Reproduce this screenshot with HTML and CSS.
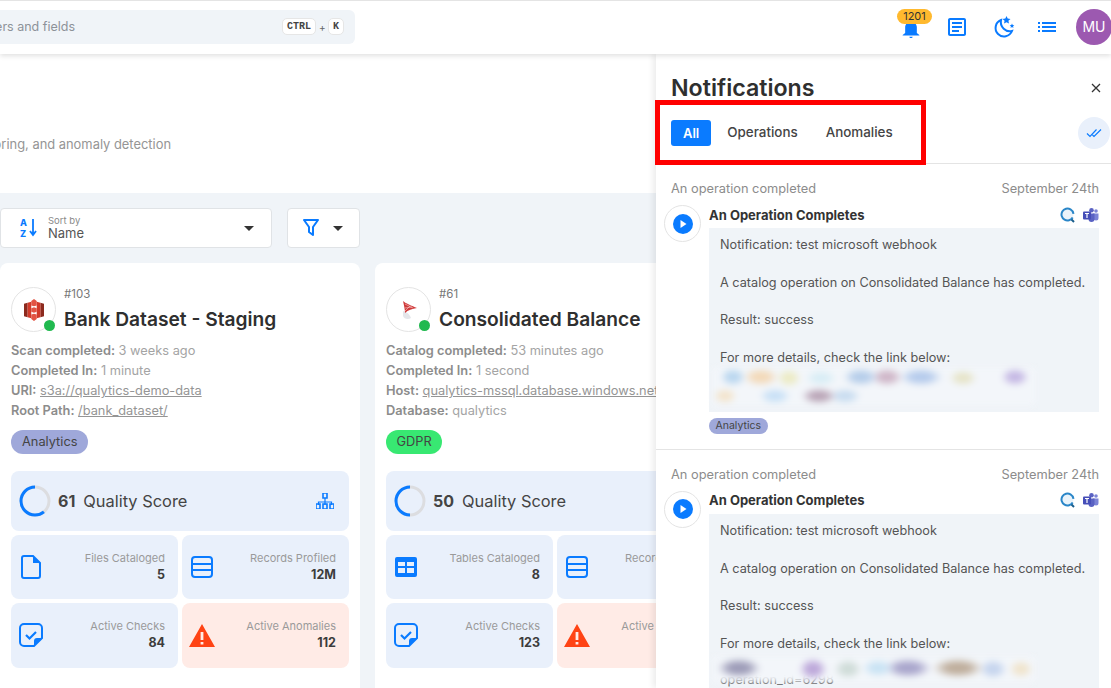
FILE: index.html
```html
<!DOCTYPE html>
<html lang="en">
<head>
    <meta charset="UTF-8">
    <meta name="viewport" content="width=device-width, initial-scale=1.0">
    <title>Datastores - Notifications</title>
    <link rel="stylesheet" href="styles.css">
</head>
<body>
    <!-- Shared icons -->
    <svg class="sprite" aria-hidden="true">
        <symbol id="i-records" viewBox="0 0 22 22"><rect x="1" y="1" width="20" height="20" rx="3" fill="none" stroke="currentColor" stroke-width="2"/><path d="M1 8h20M1 14h20" stroke="currentColor" stroke-width="2"/></symbol>
        <symbol id="i-check" viewBox="0 0 24 24"><path d="M5 1h14a4 4 0 0 1 4 4v10l-8 8H5a4 4 0 0 1-4-4V5a4 4 0 0 1 4-4z" fill="none" stroke="currentColor" stroke-width="2"/><path d="M15 23v-5a3 3 0 0 1 3-3h5z" fill="currentColor"/><path d="M7 12l3.500 3.500L17 9" fill="none" stroke="currentColor" stroke-width="2.200"/></symbol>
        <symbol id="i-warning" viewBox="0 0 26 23"><path d="M13 0l13 23H0zM11.600 8v8h2.800V8zm0 10v2.600h2.800V18z" fill="#ff4314" fill-rule="evenodd"/></symbol>
        <symbol id="i-play" viewBox="0 0 20 20"><circle cx="10" cy="10" r="10" fill="#0a7bff"/><path d="M7.500 6l6 4-6 4z" fill="#fff"/></symbol>
        <symbol id="i-search" viewBox="0 0 16 16"><circle cx="7.500" cy="7.500" r="6" fill="#eaf3fa" stroke="#2a86c8" stroke-width="2" stroke-dasharray="33 5" transform="rotate(30 7.500 7.500)"/><path d="M11.500 12.500l2.500 2.500" stroke="#1b5e8c" stroke-width="2"/></symbol>
        <symbol id="i-teams" viewBox="0 0 16 14"><circle cx="13" cy="3" r="1.800" fill="#7b83d6"/><path d="M10 5.500h5.500v4.500a2.500 2.500 0 0 1-5 0z" fill="#7b83d6"/><circle cx="8.500" cy="2.300" r="2.300" fill="#5a62c3"/><path d="M4.500 5.500h7v5.500a3 3 0 0 1-6 0z" fill="#5a62c3"/><rect x="0" y="3.500" width="8" height="8" rx="1" fill="#464eb8"/><path d="M2 5.500h4M4 5.500v4.500" stroke="#fff" stroke-width="1.200"/></symbol>
    </svg>

    <header class="topbar">
        <div class="search">
            <span class="search-text"><span>Search datastores, containers and fields</span></span>
            <span class="keys"><kbd>CTRL</kbd><i>+</i><kbd>K</kbd></span>
        </div>
        <div class="top-actions">
            <span class="bell">
                <span class="bell-badge">1201</span>
                <svg width="22" height="22" viewBox="0 0 24 24"><path fill="#0a7bff" d="M12 24c1.100 0 2-.5 2-1.500h-4c0 1 .890 1.500 2 1.500zm7-6v-7c0-3-2-6-7-6s-7 3-7 6v7l-3 2.500V21h20v-.500z"/></svg>
            </span>
            <svg class="top-icon icon-doc" width="24" height="24" viewBox="0 0 24 24"><path fill="#0a7bff" d="M19 5v14H5V5h14m0-2H5c-1.100 0-2 .9-2 2v14c0 1.100.9 2 2 2h14c1.100 0 2-.9 2-2V5c0-1.100-.9-2-2-2z"/><path fill="#0a7bff" d="M14 17H7v-2h7v2zm3-4H7v-2h10v2zm0-4H7V7h10v2z"/></svg>
            <svg class="top-icon icon-moon" width="24" height="24" viewBox="0 0 24 24"><path fill="none" stroke="#0a7bff" stroke-width="2" d="M10 5a8.500 8.500 0 1 0 11 11c-6 1.500-12.500-4-11-11z"/><path fill="#0a7bff" d="M15.500 1l1.200 2.600 2.800.3-2.100 1.900.6 2.800-2.500-1.400-2.500 1.400.6-2.800-2.100-1.900 2.800-.3zM21 8.500l.7 1.500 1.600.2-1.200 1.100.3 1.600-1.400-.8-1.400.8.3-1.600-1.200-1.100 1.600-.2z"/></svg>
            <svg class="top-icon icon-list" width="24" height="24" viewBox="0 0 24 24"><path fill="#0a7bff" d="M3 13h2v-2H3v2zm0 4h2v-2H3v2zm0-8h2V7H3v2zm4 4h14v-2H7v2zm0 4h14v-2H7v2zM7 7v2h14V7H7z"/></svg>
            <span class="avatar">MU</span>
        </div>
    </header>

    <section class="intro">
        <p class="subtitle"><span>Data cataloging, profiling, monitoring, and anomaly detection</span></p>
    </section>

    <main class="content">
        <div class="toolbar">
            <div class="sort">
                <span class="az">
                    <span class="az-letters">A<br>Z</span>
                    <svg width="8" height="18" viewBox="0 0 8 18"><path d="M4 0v15M1 12l3 4 3-4" fill="none" stroke="#0a7bff" stroke-width="1.800"/></svg>
                </span>
                <span class="sort-text"><small>Sort by</small>Name</span>
                <span class="caret"></span>
            </div>
            <div class="filter">
                <svg width="16" height="18" viewBox="0 0 16 18"><path d="M1 1h14L10 8v8L6 13V8z" fill="none" stroke="#0a7bff" stroke-width="2" stroke-linejoin="round"/></svg>
                <span class="caret"></span>
            </div>
        </div>

        <div class="cards">
            <!-- Bank Dataset -->
            <article class="card">
                <div class="card-head">
                    <span class="logo">
                        <svg width="20" height="22" viewBox="0 0 22 24"><path fill="#8c2a1e" d="M0 5l4-1v16l-4-1zM22 5l-4-1v16l4-1z"/><path fill="#d13a2a" d="M4 4l4-1v18l-4-1zM18 4l-4-1v18l4-1z"/><path fill="#e25444" d="M8 2l3-2 3 2v5l-3 1-3-1zM8 17l3-1 3 1v5l-3 2-3-2zM8 10l3-1 3 1v4l-3 1-3-1z"/></svg>
                        <b class="dot"></b>
                    </span>
                    <div>
                        <div class="num">#103</div>
                        <h2>Bank Dataset - Staging</h2>
                    </div>
                </div>
                <ul class="meta">
                    <li><b>Scan completed:</b> 3 weeks ago</li>
                    <li><b>Completed In:</b> 1 minute</li>
                    <li><b>URI:</b> <u>s3a://qualytics-demo-data</u></li>
                    <li><b>Root Path:</b> <u>/bank_dataset/</u></li>
                </ul>
                <span class="tag tag-analytics">Analytics</span>
                <div class="score">
                    <svg class="ring" width="32" height="32" viewBox="0 0 32 32"><circle class="ring-bg" cx="16" cy="16" r="14"/><circle class="ring-val" cx="16" cy="16" r="14" pathLength="100" stroke-dasharray="61 100"/></svg>
                    <b>61</b><span>Quality Score</span>
                    <svg class="tree" width="18" height="16" viewBox="0 0 18 16"><path d="M9 5v4M2.500 12V9h13v3M9 9v3" fill="none" stroke="#0a7bff" stroke-width="1.200"/><path d="M7 0h4v5H7zM0 11h4v5H0zM7 11h4v5H7zM14 11h4v5h-4z" fill="none" stroke="#0a7bff" stroke-width="1.600"/></svg>
                </div>
                <div class="stats">
                    <div class="stat">
                        <svg class="stat-icon icon-file" width="20" height="24" viewBox="0 0 20 24"><path d="M3 1h9l7 7v13a2 2 0 0 1-2 2H3a2 2 0 0 1-2-2V3a2 2 0 0 1 2-2z" fill="none" stroke="#0a7bff" stroke-width="2"/><path d="M12 1l7 7h-7z" fill="#0a7bff"/></svg>
                        <div class="stat-text"><span>Files Cataloged</span><b>5</b></div>
                    </div>
                    <div class="stat">
                        <svg class="stat-icon" width="22" height="22"><use href="#i-records"/></svg>
                        <div class="stat-text"><span>Records Profiled</span><b>12M</b></div>
                    </div>
                    <div class="stat stat-check">
                        <svg class="stat-icon" width="24" height="24"><use href="#i-check"/></svg>
                        <div class="stat-text"><span>Active Checks</span><b>84</b></div>
                    </div>
                    <div class="stat stat-alert">
                        <svg class="stat-icon" width="26" height="23"><use href="#i-warning"/></svg>
                        <div class="stat-text"><span>Active Anomalies</span><b>112</b></div>
                    </div>
                </div>
            </article>

            <!-- Consolidated Balance -->
            <article class="card">
                <div class="card-head">
                    <span class="logo">
                        <svg width="18" height="20" viewBox="0 0 18 20"><path d="M3 11c3 1 6 2 8 7-3 2-7 1-8-2z" fill="#e4e6ea"/><path d="M3 1c2 2 9 5 14 7-5 1-9 2-12 5 0-3-1-8-2-12z" fill="#cf3a3a"/><path d="M5 4l8 4M5 8l7-1M5 11l5-5" stroke="#f6c9c9" stroke-width=".6"/></svg>
                        <b class="dot"></b>
                    </span>
                    <div>
                        <div class="num">#61</div>
                        <h2>Consolidated Balance</h2>
                    </div>
                </div>
                <ul class="meta">
                    <li><b>Catalog completed:</b> 53 minutes ago</li>
                    <li><b>Completed In:</b> 1 second</li>
                    <li><b>Host:</b> <u>qualytics-mssql.database.windows.net</u></li>
                    <li><b>Database:</b> qualytics</li>
                </ul>
                <span class="tag tag-gdpr">GDPR</span>
                <div class="score">
                    <svg class="ring" width="32" height="32" viewBox="0 0 32 32"><circle class="ring-bg" cx="16" cy="16" r="14"/><circle class="ring-val" cx="16" cy="16" r="14" pathLength="100" stroke-dasharray="50 100"/></svg>
                    <b>50</b><span>Quality Score</span>
                </div>
                <div class="stats">
                    <div class="stat">
                        <svg class="stat-icon" width="22" height="20" viewBox="0 0 22 20"><path fill="#0a7bff" fill-rule="evenodd" d="M2 0h18a2 2 0 0 1 2 2v16a2 2 0 0 1-2 2H2a2 2 0 0 1-2-2V2a2 2 0 0 1 2-2zm1 5v4h7V5zm9 0v4h7V5zM3 11v5h7v-5zm9 0v5h7v-5z"/></svg>
                        <div class="stat-text"><span>Tables Cataloged</span><b>8</b></div>
                    </div>
                    <div class="stat">
                        <svg class="stat-icon" width="22" height="22"><use href="#i-records"/></svg>
                        <div class="stat-text"><span>Records Profiled</span><b>9M</b></div>
                    </div>
                    <div class="stat stat-check">
                        <svg class="stat-icon" width="24" height="24"><use href="#i-check"/></svg>
                        <div class="stat-text"><span>Active Checks</span><b>123</b></div>
                    </div>
                    <div class="stat stat-alert">
                        <svg class="stat-icon" width="26" height="23"><use href="#i-warning"/></svg>
                        <div class="stat-text"><span>Active Anomalies</span><b>40</b></div>
                    </div>
                </div>
            </article>
        </div>
    </main>

    <!-- Notifications drawer -->
    <aside class="drawer">
        <div class="drawer-top">
            <div class="drawer-title">
                <h1>Notifications</h1>
                <svg width="10" height="10" viewBox="0 0 10 10"><path d="M1 1l8 8M9 1l-8 8" stroke="#333" stroke-width="1.300"/></svg>
            </div>
            <div class="tabs">
                <span class="tab active">All</span>
                <span class="tab">Operations</span>
                <span class="tab">Anomalies</span>
                <span class="read-all">
                    <svg width="16" height="10" viewBox="0 0 16 10"><path d="M1 5.500l3 3L10.500 1.500M6.500 7L8 8.500 15 1.500" fill="none" stroke="#0a7bff" stroke-width="1.200"/></svg>
                </span>
            </div>
        </div>

        <div class="notif">
            <div class="notif-head"><span>An operation completed</span><span>September 24th</span></div>
            <div class="notif-row">
                <span class="notif-icon"><svg width="20" height="20"><use href="#i-play"/></svg></span>
                <div class="notif-body">
                    <div class="notif-title">
                        <b>An Operation Completes</b>
                        <svg width="16" height="16"><use href="#i-search"/></svg>
                        <svg width="16" height="14"><use href="#i-teams"/></svg>
                    </div>
                    <div class="msg">
                        <p>Notification: test microsoft webhook</p>
                        <p>A catalog operation on Consolidated Balance has completed.</p>
                        <p>Result: success</p>
                        <p class="msg-tight">For more details, check the link below:</p>
                        <div class="blur blur-one"></div>
                    </div>
                    <span class="tag tag-small">Analytics</span>
                </div>
            </div>
        </div>

        <div class="notif">
            <div class="notif-head"><span>An operation completed</span><span>September 24th</span></div>
            <div class="notif-row">
                <span class="notif-icon"><svg width="20" height="20"><use href="#i-play"/></svg></span>
                <div class="notif-body">
                    <div class="notif-title">
                        <b>An Operation Completes</b>
                        <svg width="16" height="16"><use href="#i-search"/></svg>
                        <svg width="16" height="14"><use href="#i-teams"/></svg>
                    </div>
                    <div class="msg">
                        <p>Notification: test microsoft webhook</p>
                        <p>A catalog operation on Consolidated Balance has completed.</p>
                        <p>Result: success</p>
                        <p class="msg-tight">For more details, check the link below:</p>
                        <div class="blur blur-two"></div>
                        <p class="msg-tight">operation_id=6298</p>
                    </div>
                </div>
            </div>
        </div>
    </aside>

    <!-- Red annotation round the tabs -->
    <div class="highlight"></div>
</body>
</html>
```

FILE: styles.css
```css
html, body {
    height: 100%;
}

body {
    margin: 0;
    overflow: hidden;
    position: relative;
    font-family: Inter, "Open Sans", sans-serif;
    color: #333;
    background: #fff;
}

.sprite {
    display: none;
}

/* Top bar */
.topbar {
    position: relative;
    z-index: 3;
    height: 54px;
    box-sizing: border-box;
    padding: 10px 0 0 0;
    display: flex;
    justify-content: space-between;
    background: #fff;
    border-top: 1px solid #e4e4e4;
    box-shadow: 0 2px 5px rgba(0, 0, 0, 0.12);
}

.search {
    width: 355px;
    height: 34px;
    box-sizing: border-box;
    margin-top: -1px;
    padding: 0 11px 1px 0;
    display: flex;
    align-items: center;
    justify-content: space-between;
    background: #f0f4f8;
    border-radius: 0 6px 6px 0;
    font-size: 12.500px;
    color: #8d9299;
}

.search-text {
    width: 75px;
    display: flex;
    justify-content: flex-end;
    overflow: hidden;
    white-space: nowrap;
}

.keys {
    display: flex;
    align-items: center;
    gap: 3px;
}

.keys i {
    width: 6px;
    font-style: normal;
    font-size: 10px;
    text-align: center;
    color: #666;
}

kbd {
    padding: 2px 4px;
    background: #fff;
    border: 1px solid #e6e6e6;
    border-radius: 5px;
    font-family: "Liberation Mono", monospace;
    font-size: 10px;
    font-weight: 700;
    color: #444;
}

.top-actions {
    display: flex;
    align-items: flex-start;
    margin-top: -1px;
}

.top-icon {
    margin-top: 5px;
}

.icon-doc {
    margin-left: 12.500px;
}

.icon-moon {
    margin-left: 22px;
}

.icon-list {
    margin-left: 20px;
}

.bell {
    position: relative;
    width: 35px;
    height: 30px;
    display: flex;
    justify-content: flex-start;
}

.bell svg {
    margin: 8px 0 0 4px;
    width: 20px;
    height: 20px;
}

.bell-badge {
    position: absolute;
    top: -1px;
    left: 0;
    width: 35px;
    height: 15px;
    background: #ffb92e;
    border-radius: 8px;
    font-size: 11px;
    line-height: 15px;
    text-align: center;
    color: #333;
}

.avatar {
    width: 36px;
    height: 36px;
    margin: -1px -1px 0 17.500px;
    border-radius: 50%;
    background: #9c59b0;
    color: #fff;
    font-size: 14px;
    line-height: 36px;
    text-align: center;
}

/* Intro */
.intro {
    height: 139px;
    box-sizing: border-box;
    padding-top: 82px;
}

.subtitle {
    width: 171px;
    margin: 0;
    display: flex;
    justify-content: flex-end;
    overflow: hidden;
    white-space: nowrap;
    font-size: 12.900px;
    line-height: 18px;
    color: #959595;
}

/* Content */
.content {
    height: 495px;
    box-sizing: border-box;
    padding-top: 15px;
    background: #f0f4f8;
}

.toolbar {
    display: flex;
    gap: 15px;
    height: 40px;
}

.sort, .filter {
    box-sizing: border-box;
    display: flex;
    align-items: center;
    background: #fff;
    border: 1px solid #e0e3e6;
    border-radius: 4px;
}

.sort {
    width: 272px;
    padding: 0 17px 0 19px;
}

.filter {
    width: 73px;
    padding: 0 16px 0 15px;
    justify-content: space-between;
}

.az {
    display: flex;
    align-items: center;
    gap: 2px;
    width: 28px;
}

.az-letters {
    font-size: 9px;
    line-height: 11px;
    font-weight: 800;
    color: #0a7bff;
}

.sort-text {
    flex: 1;
    padding-bottom: 2px;
    font-size: 13px;
    line-height: 14px;
    color: #555;
}

.sort-text small {
    display: block;
    font-size: 9.500px;
    line-height: 11px;
    color: #8a8a8a;
}

.caret {
    width: 0;
    height: 0;
    border-left: 5px solid transparent;
    border-right: 5px solid transparent;
    border-top: 5px solid #333;
}

.cards {
    display: flex;
    gap: 15px;
    margin-top: 15px;
}

.card {
    flex: 0 0 360px;
    box-sizing: border-box;
    height: 440px;
    padding: 24px 11px 0;
    background: #fff;
    border-radius: 8px;
}

.card-head {
    display: flex;
    gap: 8px;
}

.logo {
    position: relative;
    flex: none;
    width: 45px;
    height: 45px;
    box-sizing: border-box;
    display: flex;
    align-items: center;
    justify-content: center;
    border: 1px solid #e4e4e4;
    border-radius: 50%;
}

.dot {
    position: absolute;
    right: 0;
    bottom: 0;
    width: 11px;
    height: 11px;
    background: #20b94f;
    border-radius: 50%;
}

.num {
    font-size: 11.500px;
    line-height: 14px;
    color: #777;
}

.card h2 {
    margin: 5px 0 0;
    font-size: 19.200px;
    line-height: 26px;
    font-weight: 600;
    color: #2f2f2f;
    white-space: nowrap;
}

.meta {
    list-style: none;
    margin: 9px 0 0;
    padding: 0;
    font-size: 12.800px;
    line-height: 20px;
    color: #a4a4a4;
    white-space: nowrap;
}

.meta b {
    font-weight: 600;
    color: #8c8c8c;
}

.meta u {
    color: #959595;
}

.tag {
    display: inline-block;
    padding: 0 11px;
    height: 24px;
    margin-top: 9px;
    border-radius: 12px;
    font-size: 12.800px;
    line-height: 24px;
    color: #444;
}

.tag-analytics, .tag-small {
    background: #9fa8da;
}

.tag-gdpr {
    background: #38e872;
    padding: 0 10.500px;
}

.score {
    height: 60px;
    box-sizing: border-box;
    margin-top: 17px;
    padding: 0 15px 0 8px;
    display: flex;
    align-items: center;
    background: #e9f0fb;
    border-radius: 8px;
    font-size: 16px;
    color: #444;
}

.score span {
    font-size: 16.400px;
}

.score b {
    margin-left: 7px;
    margin-right: 8px;
    font-weight: 700;
}

.ring {
    transform: rotate(-90deg) scaleY(-1);
}

.ring circle {
    fill: none;
    stroke-width: 3;
}

.ring-bg {
    stroke: #dcdde0;
}

.ring-val {
    stroke: #0a7bff;
}

.tree {
    margin-left: auto;
}

.stats {
    display: grid;
    grid-template-columns: 1fr 1fr;
    grid-template-rows: 64px 65px;
    gap: 4px;
    margin-top: 4px;
}

.stat {
    box-sizing: border-box;
    padding: 0 13px 0 9px;
    display: flex;
    align-items: center;
    justify-content: space-between;
    background: #e9f0fb;
    border-radius: 8px;
    color: #0a7bff;
}

.stat-check {
    padding-left: 8px;
    padding-bottom: 1px;
}

.stat-alert {
    padding-left: 7px;
    padding-bottom: 1px;
    background: #ffebe6;
}

.icon-file {
    margin-left: 1px;
}

.stat-text {
    text-align: right;
    white-space: nowrap;
}

.stat-text span {
    display: block;
    font-size: 11px;
    line-height: 16px;
    color: #9a9a9a;
}

.stat-text b {
    display: block;
    font-size: 12.500px;
    line-height: 18px;
    font-weight: 700;
    color: #3c3c3c;
}

/* Drawer */
.drawer {
    position: absolute;
    z-index: 2;
    top: 54px;
    right: 0;
    bottom: 0;
    width: 455px;
    background: #fff;
    box-shadow: -3px 0 6px rgba(0, 0, 0, 0.08);
    overflow: hidden;
}

.drawer-top {
    height: 110px;
    box-sizing: border-box;
    padding: 21px 0 0 15px;
    border-bottom: 1px solid #e4e4e4;
}

.drawer-title {
    display: flex;
    align-items: center;
    justify-content: space-between;
    padding-right: 10px;
}

.drawer-title h1 {
    margin: 0;
    font-size: 23.200px;
    line-height: 26px;
    font-weight: 600;
    color: #2f2f2f;
}

.tabs {
    display: flex;
    align-items: center;
    margin-top: 19px;
    height: 26px;
    font-size: 13.400px;
    font-weight: 500;
    color: #444;
}

.tab {
    padding: 0 14px 1px;
    line-height: 25px;
}

.tab.active {
    padding: 0 12px;
    margin-right: 2px;
    background: #0a7bff;
    color: #fff;
    border-radius: 3px;
    font-size: 13px;
    line-height: 26px;
    font-weight: 600;
}

.read-all {
    width: 32px;
    height: 32px;
    margin-left: auto;
    margin-right: 1px;
    display: flex;
    align-items: center;
    justify-content: center;
    background: #e9f0fb;
    border-radius: 50%;
}

.notif {
    padding: 16px 12px 15px 8px;
    border-bottom: 1px solid #e4e4e4;
}

.notif-head {
    display: flex;
    justify-content: space-between;
    padding-left: 7px;
    font-size: 12.800px;
    line-height: 18px;
    color: #8c8c8c;
}

.notif-row {
    display: flex;
    gap: 8px;
    margin-top: 7px;
}

.notif-icon {
    flex: none;
    width: 37px;
    height: 37px;
    box-sizing: border-box;
    display: flex;
    align-items: center;
    justify-content: center;
    border: 1px solid #e4e4e4;
    border-radius: 50%;
}

.notif-body {
    flex: 1;
    min-width: 0;
}

.notif-title {
    display: flex;
    align-items: center;
    gap: 7px;
    margin-top: 0.500px;
    height: 18px;
    font-size: 13px;
}

.notif-title b {
    flex: 1;
    font-weight: 700;
    color: #333;
}

.msg {
    margin-top: 4.500px;
    padding: 8.400px 8px 6.600px 11px;
    background: #f0f4f8;
    font-size: 12.700px;
    line-height: 18.750px;
    color: #555;
    white-space: nowrap;
}

.msg p {
    margin: 0 0 18.750px;
}

.msg p.msg-tight {
    margin-bottom: 0;
}

.blur {
    position: relative;
    margin-left: -7px;
    width: 322px;
    filter: blur(3px);
}

.blur-one {
    height: 37.500px;
    background-color: #f3f6fa;
    background-image:
        radial-gradient(ellipse 13px 9px at 20px 9px, #b9d6ef 45%, transparent),
        radial-gradient(ellipse 18px 9px at 48px 9px, #f3d9b8 45%, transparent),
        radial-gradient(ellipse 12px 9px at 76px 10px, #ecebc4 45%, transparent),
        radial-gradient(ellipse 16px 8px at 108px 10px, #d8edf5 45%, transparent),
        radial-gradient(ellipse 18px 9px at 148px 9px, #b5cdea 45%, transparent),
        radial-gradient(ellipse 16px 9px at 174px 9px, #cfb6c8 45%, transparent),
        radial-gradient(ellipse 22px 9px at 208px 9px, #b5cbec 45%, transparent),
        radial-gradient(ellipse 14px 8px at 250px 10px, #e6e4c8 45%, transparent),
        radial-gradient(ellipse 14px 9px at 302px 9px, #c5b8e4 45%, transparent),
        radial-gradient(ellipse 12px 8px at 12px 28px, #f3e4cc 45%, transparent),
        radial-gradient(ellipse 16px 8px at 62px 28px, #c8e0f6 45%, transparent),
        radial-gradient(ellipse 18px 8px at 106px 28px, #b9a4b6 45%, transparent),
        radial-gradient(ellipse 16px 8px at 132px 28px, #c8dcf0 45%, transparent);
}

.blur-two {
    height: 25px;
    margin-top: 4px;
    margin-bottom: -11px;
    z-index: 1;
    background-color: #f3f6fa;
    background-image:
        radial-gradient(ellipse 22px 10px at 26px 11px, #9d9cb8 45%, transparent),
        radial-gradient(ellipse 14px 11px at 100px 12px, #bda8da 45%, transparent),
        radial-gradient(ellipse 14px 10px at 135px 12px, #cfdcd8 45%, transparent),
        radial-gradient(ellipse 16px 9px at 165px 11px, #c9e3f4 45%, transparent),
        radial-gradient(ellipse 24px 10px at 195px 11px, #a9a6cc 45%, transparent),
        radial-gradient(ellipse 26px 10px at 245px 11px, #bfae9c 45%, transparent),
        radial-gradient(ellipse 14px 10px at 280px 12px, #c6d5ee 45%, transparent),
        radial-gradient(ellipse 12px 9px at 308px 12px, #f0e4cc 45%, transparent);
}

.tag-small {
    display: block;
    width: fit-content;
    height: 16px;
    margin-top: 6px;
    padding: 0 6.500px;
    border-radius: 8px;
    font-size: 10.500px;
    line-height: 16px;
}

/* Annotation */
.highlight {
    position: absolute;
    z-index: 4;
    left: 655px;
    top: 100px;
    width: 271px;
    height: 65px;
    box-sizing: border-box;
    border: 5px solid #f00;
}
```
